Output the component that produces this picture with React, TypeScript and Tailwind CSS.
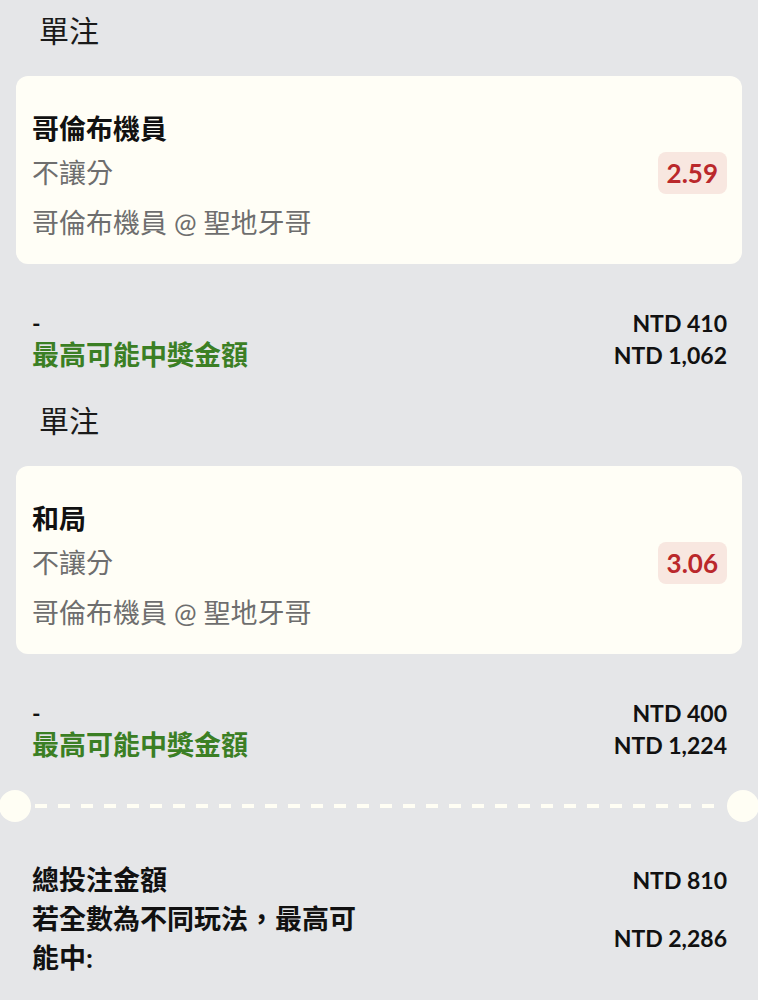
import React from 'react';

interface Bet {
  selection: string;
  market: string;
  match: string;
  odds: string;
  stake: string;
  payout: string;
}

const bets: Bet[] = [
  {
    selection: '哥倫布機員',
    market: '不讓分',
    match: '哥倫布機員 @ 聖地牙哥',
    odds: '2.59',
    stake: 'NTD 410',
    payout: 'NTD 1,062',
  },
  {
    selection: '和局',
    market: '不讓分',
    match: '哥倫布機員 @ 聖地牙哥',
    odds: '3.06',
    stake: 'NTD 400',
    payout: 'NTD 1,224',
  },
];

const font = { fontFamily: 'Lato, "Noto Sans CJK TC", sans-serif' };

const BetBlock: React.FC<{ bet: Bet }> = ({ bet }) => (
  <div>
    {/* Section title */}
    <div className="pl-[39px] text-[30px] leading-[42px] text-[#1a1a1a]">單注</div>

    {/* Selection card */}
    <div className="mx-[16px] mt-[25px] flex items-center justify-between rounded-[12px] bg-[#fffef6] pl-[16px] pr-[15px] pt-[31px] pb-[19px]">
      <div>
        <div className="text-[27px] font-bold leading-[44px] text-[#111]">{bet.selection}</div>
        <div className="text-[27px] leading-[44px] text-[#6e6e6e]">{bet.market}</div>
        <div className="mt-[6px] text-[27px] leading-[44px] text-[#6e6e6e]">{bet.match}</div>
      </div>
      <div className="-mt-[6px] flex h-[42px] items-center rounded-[8px] bg-[#f8e7e0] px-[9px] text-[26px] font-bold text-[#ba282b]">
        {bet.odds}
      </div>
    </div>

    {/* Stake / payout */}
    <div className="mt-[43px] flex justify-between pl-[32px] pr-[31px]">
      <div>
        <div className="text-[23px] font-bold leading-[32px] text-[#111]">-</div>
        <div className="text-[27px] font-bold leading-[32px] text-[#3b7f24]">最高可能中獎金額</div>
      </div>
      <div className="text-right text-[23px] font-bold leading-[32px] text-[#111]">
        <div>{bet.stake}</div>
        <div>{bet.payout}</div>
      </div>
    </div>
  </div>
);

export default function App() {
  return (
    <div className="min-h-[1000px] w-[758px] overflow-hidden bg-[#e5e6e8] pt-[9px]" style={font}>
      <BetBlock bet={bets[0]} />
      <div className="mt-[28px]">
        <BetBlock bet={bets[1]} />
      </div>

      {/* Ticket divider */}
      <div className="mt-[29px] flex h-[32px] items-center">
        <div className="-ml-[1px] h-[32px] w-[32px] shrink-0 rounded-full bg-[#fffef4]" />
        <div className="mx-[4px] h-[4px] flex-1 bg-[repeating-linear-gradient(90deg,#fffef4_0px,#fffef4_12px,transparent_12px,transparent_23px)]" />
        <div className="-mr-[1px] h-[32px] w-[32px] shrink-0 rounded-full bg-[#fffef4]" />
      </div>

      {/* Totals */}
      <div className="mt-[39px] grid grid-cols-[1fr_auto] pl-[32px] pr-[31px] font-bold text-[#111]">
        <div className="text-[27px] leading-[38px]">總投注金額</div>
        <div className="text-right text-[23px] leading-[38px]">NTD 810</div>
        <div className="max-w-[340px] text-[27px] leading-[39px]">若全數為不同玩法，最高可能中:</div>
        <div className="self-center text-right text-[23px] leading-[38px]">NTD 2,286</div>
      </div>
    </div>
  );
}
